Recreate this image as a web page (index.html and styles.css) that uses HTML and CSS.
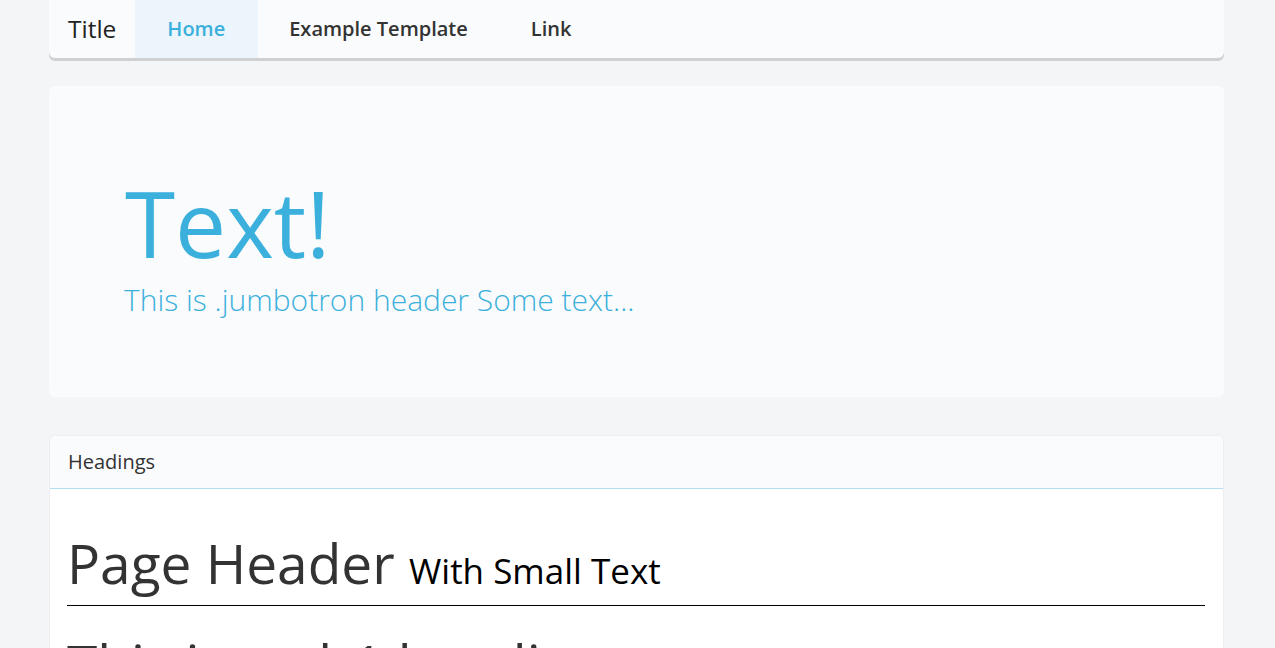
FILE: index.html
```html
<!DOCTYPE html>
<html>
<head>
<meta charset="utf-8">
<link rel="stylesheet" href="styles.css">
</head>
<body>
<div class="container">
  <nav class="navbar">
    <span class="brand">Title</span>
    <a class="nav-item active">Home</a>
    <a class="nav-item">Example Template</a>
    <a class="nav-item">Link</a>
  </nav>
  <section class="jumbotron">
    <h1 class="jumbo-title">Text!</h1>
    <p class="jumbo-lead">This is .jumbotron header Some text...</p>
  </section>
  <section class="card">
    <div class="card-header">Headings</div>
    <div class="card-body">
      <h1 class="page-header">Page Header <small>With Small Text</small></h1>
      <h1 class="h1">This is an h1 heading</h1>
    </div>
  </section>
</div>
</body>
</html>
```
FILE: styles.css
```css
* { box-sizing: border-box; }
html, body { margin: 0; padding: 0; }
body {
  background: #f4f5f7;
  font-family: "Open Sans", "Liberation Sans", sans-serif;
  color: #333;
  overflow: hidden;
}
.container {
  width: 1175px;
  margin: 0 auto;
  position: relative;
  left: -1px;
}
.navbar {
  display: flex;
  align-items: stretch;
  height: 58px;
  background: #fafbfc;
  border-radius: 0 0 6px 6px;
  box-shadow: 0 3px 0 #cfd0d2;
  padding-left: 19px;
  padding-bottom: 2px;
}
.brand {
  display: flex;
  align-items: center;
  font-size: 24.5px;
  color: #222;
  padding-right: 19px;
}
.nav-item {
  display: flex;
  align-items: center;
  padding: 0 32px 0 31px;
  font-size: 20px;
  font-weight: 600;
  color: #333;
}
.nav-item.active {
  margin-bottom: -2px;
  padding: 0 33px 2px 32px;
  background: #ecf5fb;
  color: #3bb0dc;
}
.jumbotron {
  margin-top: 28px;
  background: #fafbfc;
  border-radius: 6px;
  height: 311px;
  padding: 83px 74px 0 75px;
}
.jumbo-title {
  margin: 0 0 0 1px;
  font-size: 91px;
  font-weight: 400;
  line-height: 1.2;
  color: #3bb0dc;
}
.jumbo-lead {
  margin: 1px 0 0;
  font-size: 30px;
  font-weight: 300;
  color: #3bb0dc;
}
.card {
  margin-top: 38px;
  background: #fff;
  border: 1px solid #eceef0;
  border-bottom: 0;
  border-radius: 6px 6px 0 0;
}
.card-header {
  height: 53px;
  background: #fafbfc;
  border-bottom: 1px solid #b3e1f1;
  border-radius: 6px 6px 0 0;
  padding: 12px 18px 0;
  font-size: 20px;
  color: #333;
}
.card-body {
  padding: 41px 18px 0 17px;
}
.page-header {
  margin: 0;
  font-size: 55px;
  font-weight: 400;
  line-height: 1.2;
  color: #333;
  border-bottom: 1px solid #000;
  padding-bottom: 9px;
}
.page-header small {
  font-size: 35px;
  color: #000;
}
.h1 {
  margin: 25px 0 0;
  font-size: 55px;
  font-weight: 400;
  line-height: 1.2;
  color: #333;
}
```
